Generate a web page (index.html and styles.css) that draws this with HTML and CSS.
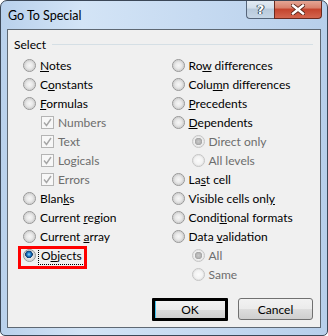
FILE: index.html
```html
<!DOCTYPE html>
<html lang="en">
<head>
    <meta charset="UTF-8">
    <title>Go To Special</title>
    <link rel="stylesheet" href="styles.css">
</head>
<body>

    <div class="window">
        <div class="titlebar">
            <span class="title">Go To Special</span>
            <div class="caption-buttons">
                <span class="cap-btn help">?</span>
                <span class="cap-btn close">
                    <svg width="14" height="11" viewBox="0 0 14 11">
                        <path d="M2 1.5 L12 9.5 M12 1.5 L2 9.5" stroke="#5a2418" stroke-width="4.2" stroke-linecap="square"/>
                        <path d="M2 1.5 L12 9.5 M12 1.5 L2 9.5" stroke="#fff" stroke-width="2.4" stroke-linecap="square"/>
                    </svg>
                </span>
            </div>
        </div>

        <div class="client">
            <div class="group-head">
                <span>Select</span>
                <span class="group-line"></span>
            </div>

            <div class="options">
                <!-- left column -->
                <div class="col">
                    <div class="opt"><span class="radio"></span><span><u>N</u>otes</span></div>
                    <div class="opt"><span class="radio"></span><span>C<u>o</u>nstants</span></div>
                    <div class="opt"><span class="radio"></span><span><u>F</u>ormulas</span></div>
                    <div class="opt sub disabled"><span class="check"><svg width="11" height="11" viewBox="0 0 11 11"><path d="M2 5.5 L4.5 8.5 L9 2" fill="none" stroke="#a6a6a6" stroke-width="1.4"/></svg></span><span>Numbers</span></div>
                    <div class="opt sub disabled"><span class="check"><svg width="11" height="11" viewBox="0 0 11 11"><path d="M2 5.5 L4.5 8.5 L9 2" fill="none" stroke="#a6a6a6" stroke-width="1.4"/></svg></span><span>Text</span></div>
                    <div class="opt sub disabled"><span class="check"><svg width="11" height="11" viewBox="0 0 11 11"><path d="M2 5.5 L4.5 8.5 L9 2" fill="none" stroke="#a6a6a6" stroke-width="1.4"/></svg></span><span>Logicals</span></div>
                    <div class="opt sub disabled"><span class="check"><svg width="11" height="11" viewBox="0 0 11 11"><path d="M2 5.5 L4.5 8.5 L9 2" fill="none" stroke="#a6a6a6" stroke-width="1.4"/></svg></span><span>Errors</span></div>
                    <div class="opt"><span class="radio"></span><span>Blan<u>k</u>s</span></div>
                    <div class="opt"><span class="radio"></span><span>Current <u>r</u>egion</span></div>
                    <div class="opt"><span class="radio"></span><span>Current <u>a</u>rray</span></div>
                    <div class="opt marked"><span class="radio on"></span><span class="focus">O<u>b</u>jects</span></div>
                </div>

                <!-- right column -->
                <div class="col">
                    <div class="opt"><span class="radio"></span><span>Ro<u>w</u> differences</span></div>
                    <div class="opt"><span class="radio"></span><span>Colu<u>m</u>n differences</span></div>
                    <div class="opt"><span class="radio"></span><span><u>P</u>recedents</span></div>
                    <div class="opt"><span class="radio"></span><span><u>D</u>ependents</span></div>
                    <div class="opt subradio disabled"><span class="radio on"></span><span>Direct only</span></div>
                    <div class="opt subradio disabled"><span class="radio"></span><span>All levels</span></div>
                    <div class="opt"><span class="radio"></span><span>La<u>s</u>t cell</span></div>
                    <div class="opt"><span class="radio"></span><span>Visible cells onl<u>y</u></span></div>
                    <div class="opt"><span class="radio"></span><span>Condi<u>t</u>ional formats</span></div>
                    <div class="opt"><span class="radio"></span><span>Data <u>v</u>alidation</span></div>
                    <div class="opt subradio disabled"><span class="radio on"></span><span>All</span></div>
                    <div class="opt subradio disabled"><span class="radio"></span><span>Same</span></div>
                </div>
            </div>

            <div class="buttons">
                <button class="btn default">OK</button>
                <button class="btn">Cancel</button>
            </div>
        </div>
    </div>

</body>
</html>
```

FILE: styles.css
```css
/* General Styles */
html, body {
    margin: 0;
    background-color: #fff;
}

body {
    font-family: 'Lato', 'Liberation Sans', sans-serif;
    font-size: 12px;
    color: #000;
}

/* Window frame */
.window {
    width: 328px;
    height: 336px;
    box-sizing: border-box;
    border: 1px solid #3b4757;
    border-radius: 7px 7px 5px 5px;
    background: linear-gradient(to right, #b9d1ec 0%, #d3e4f6 25%, #c6daf1 60%, #b7cfeb 100%);
    display: flex;
    flex-direction: column;
    overflow: hidden;
}

.titlebar {
    height: 28px;
    flex: none;
    display: flex;
    justify-content: space-between;
    align-items: flex-start;
    padding: 0 5px 0 7px;
}

.title {
    margin-top: 7px;
    line-height: 16px;
    font-size: 12.5px;
}

.caption-buttons {
    display: flex;
    margin-top: -1px;
}

.cap-btn {
    height: 19px;
    box-sizing: border-box;
    display: flex;
    align-items: center;
    justify-content: center;
    border: 1px solid #56657a;
    border-top: none;
}

.help {
    width: 28px;
    border-right: none;
    border-radius: 0 0 0 4px;
    background: linear-gradient(#e4ebf3 0%, #d3dfeb 45%, #b8c9db 50%, #c6d6e6 100%);
    color: #fff;
    font-family: 'DejaVu Sans', sans-serif;
    font-weight: bold;
    font-size: 13px;
    text-shadow: 0 0 1px #334455, 0 0 1px #334455, 1px 0 0 #334455, -1px 0 0 #334455;
}

.close {
    width: 48px;
    border-color: #6b2a1f;
    border-radius: 0 0 4px 0;
    background: linear-gradient(#e6ab9a 0%, #d8806b 45%, #c4432c 50%, #d3664f 100%);
}

/* Client area */
.client {
    flex: none;
    height: 299px;
    box-sizing: border-box;
    margin: 0 6px;
    border: 1px solid #5e6873;
    background-color: #f0f0f0;
    display: flex;
    flex-direction: column;
}

.group-head {
    display: flex;
    align-items: center;
    gap: 6px;
    height: 16px;
    margin: 6px 7px 0 6px;
}

.group-line {
    flex: 1;
    height: 1px;
    background-color: #d5dfe5;
    margin-top: 1px;
}

.options {
    display: flex;
    margin: 4px 0 0 15px;
}

.col {
    width: 150px;
    display: flex;
    flex-direction: column;
}

.opt {
    position: relative;
    height: 19px;
    display: flex;
    align-items: center;
    gap: 4px;
    white-space: nowrap;
}

.opt.sub {
    padding-left: 18px;
}

.opt.subradio {
    padding-left: 20px;
}

.opt.disabled {
    color: #6d6d6d;
}

/* Radio buttons */
.radio {
    width: 13px;
    height: 13px;
    flex: none;
    box-sizing: border-box;
    border-radius: 50%;
    border: 1px solid #969696;
    background: radial-gradient(circle at 50% 50%, #f6f6f6 0, #e9e9e9 3px, #d4d4d4 5px, #f3f3f3 6px);
}

.radio.on {
    background:
        radial-gradient(circle at 45% 40%, #9ad9fb 0, #2b8ad3 1.6px, #0c4f91 3px, #1b3d6a 3.6px, transparent 4px),
        radial-gradient(circle at 50% 50%, #f6f6f6 0, #e9e9e9 3px, #d4d4d4 5px, #f3f3f3 6px);
}

.disabled .radio {
    border-color: #c4c4c4;
    background: radial-gradient(circle at 50% 50%, #fbfbfb 0, #f2f2f2 4px, #e6e6e6 5px, #f8f8f8 6px);
}

.disabled .radio.on {
    background:
        radial-gradient(circle at 50% 50%, #c9c9c9 0, #b4b4b4 2.4px, #a3a3a3 3.4px, transparent 4px),
        radial-gradient(circle at 50% 50%, #fbfbfb 0, #f2f2f2 4px, #e6e6e6 5px, #f8f8f8 6px);
}

/* Checkboxes */
.check {
    width: 13px;
    height: 13px;
    flex: none;
    box-sizing: border-box;
    border: 1px solid #b4b4b4;
    background-color: #f7f7f7;
    display: flex;
    align-items: center;
    justify-content: center;
}

/* Highlight around the chosen option */
.marked::after {
    content: '';
    position: absolute;
    left: -5px;
    top: 0;
    width: 69px;
    height: 23px;
    box-sizing: border-box;
    border: 3px solid #ff0000;
}

.focus {
    outline: 1px dotted #000;
    outline-offset: 1px;
    padding: 0 1px;
}

/* Buttons */
.buttons {
    display: flex;
    justify-content: flex-end;
    gap: 10px;
    margin: 14px 7px 0 0;
}

.btn {
    width: 75px;
    height: 22px;
    box-sizing: border-box;
    font-family: inherit;
    font-size: 12px;
    color: #000;
    border: 1px solid #707070;
    border-radius: 3px;
    background: linear-gradient(#f2f2f2 0%, #ebebeb 50%, #dddddd 51%, #cfcfcf 100%);
    padding: 0;
}

.btn.default {
    width: 76px;
    height: 23px;
    border: 3px solid #000;
    border-radius: 1px;
    box-shadow: inset 1px 0 0 #3ec6f3;
}
```
